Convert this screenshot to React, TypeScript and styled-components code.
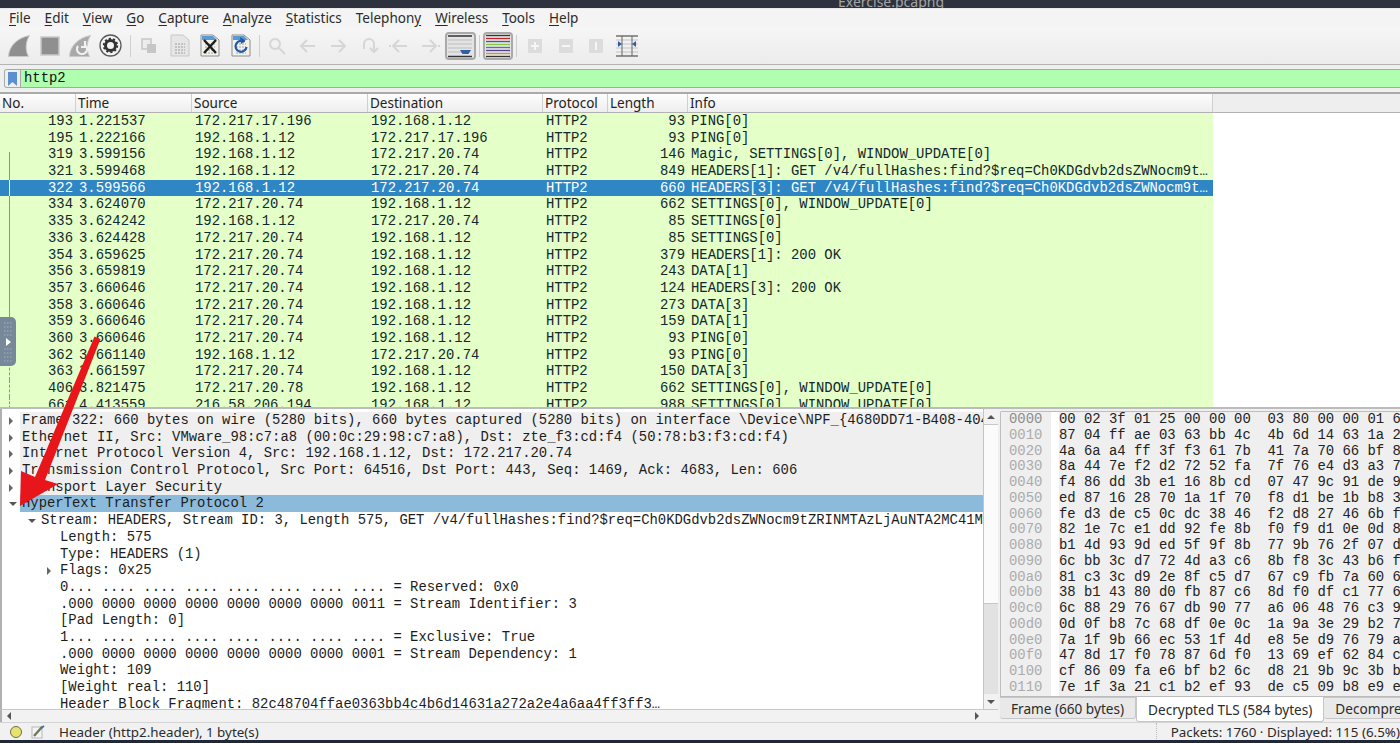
import React from "react";
import styled, { createGlobalStyle } from "styled-components";

const uiFont = `"Noto Sans", "Open Sans", sans-serif`;
const monoFont = `"Liberation Mono", monospace`;

const GlobalStyle = createGlobalStyle`
    html, body {
        margin: 0;
        padding: 0;
        overflow: hidden;
        background: #f0f0f0;
    }
`;

const Page = styled.div`
    position: relative;
    width: 1400px;
    height: 743px;
    overflow: hidden;
    display: flex;
    flex-direction: column;
    background: #f0f0f0;
    font-family: ${uiFont};
`;

const TitleBar = styled.div`
    height: 8px;
    flex: none;
    display: flex;
    align-items: flex-end;
    padding-left: 838px;
    overflow: hidden;
    background: #2d323e;
    color: #a5a5a5;
    font-size: 14px;
    line-height: 12px;
`;

const MenuBar = styled.div`
    height: 19px;
    flex: none;
    display: flex;
    align-items: center;
    gap: 14px;
    padding-left: 9px;
    background: #f4f4f4;
    color: #2b2b2b;
    font-size: 13.5px;
    border-top: 1px solid #e8e8e8;
    box-sizing: border-box;
    u {
        text-underline-offset: 2px;
    }
`;

const ToolBar = styled.div`
    height: 38px;
    flex: none;
    display: flex;
    align-items: center;
    padding-left: 4px;
    box-sizing: border-box;
    background: linear-gradient(#f6f6f6, #ececec);
    border-bottom: 1px solid #b4b4b4;
`;

const Tool = styled.div<{ $on?: boolean }>`
    width: 30.5px;
    height: 28px;
    flex: none;
    display: flex;
    align-items: center;
    justify-content: center;
    box-sizing: border-box;
    ${(p) =>
        p.$on &&
        `
        border: 2px solid #a9a9a9;
        border-radius: 4px;
        background: #e4e4e4;
    `}
`;

const ToolSep = styled.div<{ $w: number }>`
    width: ${(p) => p.$w}px;
    height: 22px;
    flex: none;
    display: flex;
    justify-content: center;
    &::after {
        content: "";
        width: 1px;
        background: #cfcfcf;
    }
`;

const FilterBar = styled.div`
    height: 25px;
    flex: none;
    padding: 4px 0 2px 4px;
    box-sizing: border-box;
    background: #efefef;
`;

const FilterInput = styled.div`
    height: 100%;
    display: flex;
    box-sizing: border-box;
    border: 1px solid #a8a8a8;
    border-right: none;
    border-radius: 3px 0 0 3px;
    background: #afffaf;
    overflow: hidden;
`;

const Bookmark = styled.div`
    width: 15px;
    flex: none;
    display: flex;
    align-items: center;
    justify-content: center;
    background: #efefef;
    border-right: 1px solid #a8a8a8;
`;

const FilterText = styled.div`
    padding-left: 3px;
    font: 13.9px/17px ${monoFont};
    color: #111;
`;

const PacketPane = styled.div`
    height: 313px;
    flex: none;
    display: flex;
    flex-direction: column;
    overflow: hidden;
    margin-top: 2px;
    border-top: 2px solid #aaa;
    border-bottom: 2px solid #bcbcbc;
    background: #fff;
`;

const ListHeader = styled.div`
    height: 18px;
    flex: none;
    display: flex;
    background: #eeeeee;
    border-bottom: 1px solid #b2b2b2;
`;

const HeaderCell = styled.div<{ $w: number }>`
    width: ${(p) => p.$w}px;
    flex: none;
    box-sizing: border-box;
    padding-left: 2px;
    font-size: 13.5px;
    line-height: 18px;
    color: #222;
    background: linear-gradient(#fdfdfd, #eeeeee);
    border-right: 1px solid #cfcfcf;
`;

const PacketRow = styled.div<{ $selected?: boolean }>`
    position: relative;
    width: 1213px;
    height: 16.7px;
    flex: none;
    display: flex;
    font: 13.9px/16.7px ${monoFont};
    white-space: pre;
    color: ${(p) => (p.$selected ? "#fff" : "#12272e")};
    background: ${(p) => (p.$selected ? "#2e86c4" : "#e4ffc7")};
`;

const RelatedLine = styled.div<{ $dash?: boolean; $light?: boolean; $start?: boolean }>`
    position: absolute;
    left: 9px;
    top: ${(p) => (p.$start ? "6px" : "0")};
    bottom: 0;
    border-left: 1px ${(p) => (p.$dash ? "dashed" : "solid")} ${(p) => (p.$light ? "#fff" : "#8a9a80")};
`;

const Cell = styled.div<{ $w: number; $right?: boolean }>`
    width: ${(p) => p.$w}px;
    flex: none;
    box-sizing: border-box;
    overflow: hidden;
    padding: ${(p) => (p.$right ? "0 3px 0 0" : "0 0 0 3px")};
    text-align: ${(p) => (p.$right ? "right" : "left")};
`;

const Bottom = styled.div`
    height: 313px;
    flex: none;
    display: flex;
    background: #f0f0f0;
`;

const DetailColumn = styled.div`
    width: 998px;
    flex: none;
    display: flex;
    flex-direction: column;
`;

const DetailMain = styled.div`
    flex: 1;
    min-height: 0;
    display: flex;
    border-left: 2px solid #b0b0b0;
`;

const DetailTree = styled.div`
    width: 981px;
    flex: none;
    padding-top: 3px;
    overflow: hidden;
    background: #fff;
`;

const DetailRow = styled.div<{ $level: number; $bg?: "grey" | "sel" }>`
    position: relative;
    height: 16.7px;
    margin-left: ${(p) => (p.$bg ? 18 : 0)}px;
    padding-left: ${(p) => (p.$bg ? 2 : 20 + p.$level * 19)}px;
    font: 13.9px/16.7px ${monoFont};
    white-space: pre;
    overflow: hidden;
    color: #1d1d1d;
    background: ${(p) => (p.$bg === "sel" ? "#8cbadb" : p.$bg === "grey" ? "#efefef" : "transparent")};
`;

const TreeRowWrap = styled.div`
    position: relative;
`;

const Twisty = styled.span<{ $open?: boolean; $level: number }>`
    position: absolute;
    top: 5px;
    left: ${(p) => 7 + p.$level * 19}px;
    width: 0;
    height: 0;
    ${(p) =>
        p.$open
            ? `
        margin-top: 2px;
        border-left: 4px solid transparent;
        border-right: 4px solid transparent;
        border-top: 4px solid #555;
    `
            : `
        border-top: 4px solid transparent;
        border-bottom: 4px solid transparent;
        border-left: 4px solid #666;
    `}
`;

const VScroll = styled.div`
    width: 15px;
    flex: none;
    display: flex;
    flex-direction: column;
    background: #e2e2e2;
    border-left: 1px solid #c4c4c4;
    box-sizing: border-box;
`;

const ScrollButton = styled.div`
    height: 15px;
    flex: none;
    display: flex;
    align-items: center;
    justify-content: center;
    background: #f2f2f2;
`;

const ScrollThumb = styled.div`
    height: 180px;
    flex: none;
    box-sizing: border-box;
    background: #fbfbfb;
    border-top: 1px solid #c8c8c8;
    border-bottom: 1px solid #c8c8c8;
`;

const ScrollTrack = styled.div`
    flex: 1;
`;

const HScroll = styled.div`
    height: 12px;
    flex: none;
    display: flex;
    align-items: center;
    justify-content: space-between;
    padding: 0 19px 0 5px;
    background: #f2f2f2;
    border-top: 1px solid #c8c8c8;
    border-left: 2px solid #b0b0b0;
`;

const Arrow = styled.span<{ $dir: "up" | "down" | "left" | "right" }>`
    width: 0;
    height: 0;
    ${(p) =>
        p.$dir === "up" || p.$dir === "down"
            ? `
        border-left: 4px solid transparent;
        border-right: 4px solid transparent;
        border-${p.$dir === "up" ? "bottom" : "top"}: 4px solid #555;
    `
            : `
        border-top: 4px solid transparent;
        border-bottom: 4px solid transparent;
        border-${p.$dir === "left" ? "right" : "left"}: 4px solid #555;
    `}
`;

const HexColumn = styled.div`
    flex: 1;
    min-width: 0;
    margin: 2px 0 0 2px;
    display: flex;
    flex-direction: column;
    overflow: hidden;
`;

const HexPane = styled.div`
    height: 286px;
    flex: none;
    box-sizing: border-box;
    overflow: hidden;
    background: #fff;
    border: 1px solid #bdbdbd;
    border-right: none;
    border-radius: 2px 0 0 0;
`;

const HexRow = styled.div`
    height: 15.77px;
    display: flex;
    font: 13.9px/15.77px ${monoFont};
    white-space: pre;
`;

const HexOffset = styled.div<{ $active?: boolean }>`
    width: 50px;
    flex: none;
    box-sizing: border-box;
    padding-left: 8px;
    color: ${(p) => (p.$active ? "#8c8c8c" : "#ababab")};
    background: #efefef;
`;

const HexBytes = styled.div`
    margin-left: 8px;
    flex: 1;
    color: #222;
    background: #efefef;
`;

const Tabs = styled.div`
    flex: 1;
    display: flex;
    align-items: flex-start;
    font-size: 13.6px;
    color: #2b2b2b;
    white-space: nowrap;
`;

const Tab = styled.div<{ $active?: boolean }>`
    flex: none;
    box-sizing: border-box;
    height: ${(p) => (p.$active ? 25 : 22)}px;
    line-height: ${(p) => (p.$active ? 25 : 22)}px;
    padding: 0 11px;
    background: ${(p) => (p.$active ? "#fff" : "#e9e9e9")};
    border: 1px solid #c6c6c6;
    border-top: ${(p) => (p.$active ? "none" : "1px solid #c6c6c6")};
    border-radius: 0 0 3px 3px;
    border-left-width: ${(p) => (p.$active ? 1 : 0)}px;
`;

const StatusBar = styled.div`
    height: 18px;
    flex: none;
    display: flex;
    align-items: center;
    font-size: 13.4px;
    color: #2b2b2b;
    white-space: nowrap;
    background: #f1f1f1;
    border-top: 1px solid #d4d4d4;
    box-sizing: border-box;
`;

const StatusDot = styled.div`
    width: 12px;
    height: 12px;
    flex: none;
    margin-left: 10px;
    box-sizing: border-box;
    border-radius: 50%;
    background: #e8e36e;
    border: 1px solid #6e6e4a;
`;

const StatusEdit = styled.div`
    margin-left: 9px;
    width: 14px;
    height: 14px;
    flex: none;
`;

const StatusText = styled.div`
    margin-left: 14px;
    flex: 1;
`;

const StatusRight = styled.div`
    padding-left: 14px;
    border-left: 1px dotted #bbb;
`;

const BottomEdge = styled.div`
    height: 3px;
    flex: none;
    background: #1f2838;
`;

const VmTab = styled.div`
    position: absolute;
    left: 0;
    top: 317px;
    width: 16px;
    height: 49px;
    display: flex;
    align-items: center;
    justify-content: center;
    border-radius: 0 5px 5px 0;
    background: #76889a;
`;

const Overlay = styled.svg`
    position: absolute;
    left: 0;
    top: 0;
    pointer-events: none;
`;

const Fin = ({ reload }: { reload?: boolean }) => (
    <svg width="24" height="24" viewBox="0 0 24 24">
        <path
            d="M1.5 22.5 C2 12 10 4 22.5 1.5 C18.5 8 18 16 21.5 22.5 Z"
            fill={reload ? "#a9a9a9" : "#8f8f8f"}
            stroke="#c9c9c9"
        />
        {reload && <path d="M10 12 a5 5 0 1 0 8 0 M17 7 v6 h-4" fill="none" stroke="#f2f2f2" strokeWidth="2.2" />}
    </svg>
);

const StopIcon = () => (
    <svg width="20" height="20" viewBox="0 0 20 20">
        <rect x="1" y="1" width="18" height="18" fill="#8f8f8f" stroke="#c9c9c9" strokeWidth="1.5" />
    </svg>
);

const GearIcon = () => (
    <svg width="23" height="23" viewBox="0 0 23 23">
        <circle cx="11.5" cy="11.5" r="10.5" fill="#f4f4f4" stroke="#5a5a5a" strokeWidth="1.3" />
        <circle cx="11.5" cy="11.5" r="5" fill="none" stroke="#333" strokeWidth="3" />
        <circle cx="11.5" cy="11.5" r="6.8" fill="none" stroke="#333" strokeWidth="1.8" strokeDasharray="2.2 2.1" />
    </svg>
);

const CopyIcon = () => (
    <svg width="16" height="16" viewBox="0 0 16 16">
        <rect x="1" y="1" width="9" height="10" fill="#ececec" stroke="#c6c6c6" strokeWidth="1.5" />
        <rect x="6" y="6" width="9" height="9" fill="#c6c6c6" />
    </svg>
);

const FileIcon = ({ variant }: { variant: "plain" | "close" | "reload" }) => {
    const dim = variant === "plain";
    return (
        <svg width="20" height="23" viewBox="0 0 20 23">
            <path d="M1 1 H13 L19 6 V22 H1 Z" fill={dim ? "#e6e6e6" : "#f2f2ea"} stroke={dim ? "#c8c8c8" : "#8d8d8d"} />
            {!dim && <path d="M2 2 H13 L17 6 H2 Z" fill="#5a9ad0" />}
            <path d="M5 10 h10 M5 13 h10 M5 16 h10 M5 19 h10" stroke={dim ? "#b5b5b5" : "#bcbcbc"} strokeWidth="1.5" strokeDasharray="2 1" />
            {variant === "close" && <path d="M4 6 L16 19 M16 6 L4 19" stroke="#1c1c1c" strokeWidth="2.4" />}
            {variant === "reload" && (
                <>
                    <path d="M13.5 8 a5.5 5.5 0 1 0 2 5" fill="none" stroke="#1f5aa8" strokeWidth="2.2" />
                    <path d="M9 3 L14.5 6.5 L10 10 Z" fill="#1f5aa8" />
                </>
            )}
        </svg>
    );
};

const FadedIcon = ({ d }: { d: string }) => (
    <svg width="20" height="20" viewBox="0 0 20 20">
        <path d={d} fill="none" stroke="#d6d6d6" strokeWidth="2" />
    </svg>
);

const ScrollIcon = () => (
    <svg width="24" height="24" viewBox="0 0 24 24">
        <path d="M0 2 H24 M0 22.5 H24" stroke="#333" strokeWidth="1.3" />
        <path d="M0 6 H24 M0 10 H24 M0 14 H24 M0 18 H14" stroke="#bdbdbd" />
        <path d="M12 16 H23 L20.5 20 H14.5 Z" fill="#2e5fa6" />
    </svg>
);

const ColorIcon = () => (
    <svg width="24" height="24" viewBox="0 0 24 24">
        {["#333", "#c8232a", "#2d5fa8", "#8cc63f", "#3a7abf", "#5a3d8c", "#c79a1e", "#333"].map((c, i) => (
            <path key={i} d={`M0 ${1.5 + i * 3} H24`} stroke={c} strokeWidth="1.3" />
        ))}
    </svg>
);

const SquareIcon = ({ mark }: { mark: string }) => (
    <svg width="14" height="14" viewBox="0 0 14 14">
        <rect width="14" height="14" fill="#dcdcdc" />
        <path d={mark} stroke="#f6f6f6" strokeWidth="2" />
    </svg>
);

const ResizeIcon = () => (
    <svg width="22" height="22" viewBox="0 0 22 22">
        <path d="M0 1 H22 M0 21 H22" stroke="#333" />
        <path d="M0 5 H22 M0 9 H22 M0 13 H22 M0 17 H22" stroke="#c4c4c4" />
        <path d="M6 1 V21 M16 1 V21" stroke="#666" />
        <path d="M2 6 L6 9 L2 12 Z M20 6 L16 9 L20 12 Z" fill="#2e5fa6" />
    </svg>
);

const columns = [76, 116, 176, 175, 65, 80, 525];

const headers = ["No.", "Time", "Source", "Destination", "Protocol", "Length", "Info"];

const a = "172.217.20.74";
const me = "192.168.1.12";
const hdr = "GET /v4/fullHashes:find?$req=Ch0KDGdvb2dsZWNocm9t…";

const packets: string[][] = [
    ["193", "1.221537", "172.217.17.196", me, "93", "PING[0]"],
    ["195", "1.222166", me, "172.217.17.196", "93", "PING[0]"],
    ["319", "3.599156", me, a, "146", "Magic, SETTINGS[0], WINDOW_UPDATE[0]"],
    ["321", "3.599468", me, a, "849", `HEADERS[1]: ${hdr}`],
    ["322", "3.599566", me, a, "660", `HEADERS[3]: ${hdr}`],
    ["334", "3.624070", a, me, "662", "SETTINGS[0], WINDOW_UPDATE[0]"],
    ["335", "3.624242", me, a, "85", "SETTINGS[0]"],
    ["336", "3.624428", a, me, "85", "SETTINGS[0]"],
    ["354", "3.659625", a, me, "379", "HEADERS[1]: 200 OK"],
    ["356", "3.659819", a, me, "243", "DATA[1]"],
    ["357", "3.660646", a, me, "124", "HEADERS[3]: 200 OK"],
    ["358", "3.660646", a, me, "273", "DATA[3]"],
    ["359", "3.660646", a, me, "159", "DATA[1]"],
    ["360", "3.660646", a, me, "93", "PING[0]"],
    ["362", "3.661140", me, a, "93", "PING[0]"],
    ["363", "3.661597", a, me, "150", "DATA[3]"],
    ["406", "3.821475", "172.217.20.78", me, "662", "SETTINGS[0], WINDOW_UPDATE[0]"],
    ["661", "4.413559", "216.58.206.194", me, "988", "SETTINGS[0], WINDOW_UPDATE[0]"],
];

type TreeItem = { text: string; level: number; twisty?: "open" | "closed"; bg?: "grey" | "sel" };

const tree: TreeItem[] = [
    {
        text: "Frame 322: 660 bytes on wire (5280 bits), 660 bytes captured (5280 bits) on interface \\Device\\NPF_{4680DD71-B408-404F-8C1A}",
        level: 0,
        twisty: "closed",
        bg: "grey",
    },
    {
        text: "Ethernet II, Src: VMware_98:c7:a8 (00:0c:29:98:c7:a8), Dst: zte_f3:cd:f4 (50:78:b3:f3:cd:f4)",
        level: 0,
        twisty: "closed",
        bg: "grey",
    },
    { text: "Internet Protocol Version 4, Src: 192.168.1.12, Dst: 172.217.20.74", level: 0, twisty: "closed", bg: "grey" },
    {
        text: "Transmission Control Protocol, Src Port: 64516, Dst Port: 443, Seq: 1469, Ack: 4683, Len: 606",
        level: 0,
        twisty: "closed",
        bg: "grey",
    },
    { text: "Transport Layer Security", level: 0, twisty: "closed", bg: "grey" },
    { text: "HyperText Transfer Protocol 2", level: 0, twisty: "open", bg: "sel" },
    {
        text: "Stream: HEADERS, Stream ID: 3, Length 575, GET /v4/fullHashes:find?$req=Ch0KDGdvb2dsZWNocm9tZRINMTAzLjAuNTA2MC41Mw",
        level: 1,
        twisty: "open",
    },
    { text: "Length: 575", level: 2 },
    { text: "Type: HEADERS (1)", level: 2 },
    { text: "Flags: 0x25", level: 2, twisty: "closed" },
    { text: "0... .... .... .... .... .... .... .... = Reserved: 0x0", level: 2 },
    { text: ".000 0000 0000 0000 0000 0000 0000 0011 = Stream Identifier: 3", level: 2 },
    { text: "[Pad Length: 0]", level: 2 },
    { text: "1... .... .... .... .... .... .... .... = Exclusive: True", level: 2 },
    { text: ".000 0000 0000 0000 0000 0000 0000 0001 = Stream Dependency: 1", level: 2 },
    { text: "Weight: 109", level: 2 },
    { text: "[Weight real: 110]", level: 2 },
    { text: "Header Block Fragment: 82c48704ffae0363bb4c4b6d14631a272a2e4a6aa4ff3ff3…", level: 2 },
];

const hex: [string, string][] = [
    ["0000", "00 02 3f 01 25 00 00 00  03 80 00 00 01 6"],
    ["0010", "87 04 ff ae 03 63 bb 4c  4b 6d 14 63 1a 2"],
    ["0020", "4a 6a a4 ff 3f f3 61 7b  41 7a 70 66 bf 8"],
    ["0030", "8a 44 7e f2 d2 72 52 fa  7f 76 e4 d3 a3 7"],
    ["0040", "f4 86 dd 3b e1 16 8b cd  07 47 9c 91 de 9"],
    ["0050", "ed 87 16 28 70 1a 1f 70  f8 d1 be 1b b8 3"],
    ["0060", "fe d3 de c5 0c dc 38 46  f2 d8 27 46 6b f"],
    ["0070", "82 1e 7c e1 dd 92 fe 8b  f0 f9 d1 0e 0d 8"],
    ["0080", "b1 4d 93 9d ed 5f 9f 8b  77 9b 76 2f 07 d"],
    ["0090", "6c bb 3c d7 72 4d a3 c6  8b f8 3c 43 b6 f"],
    ["00a0", "81 c3 3c d9 2e 8f c5 d7  67 c9 fb 7a 60 6"],
    ["00b0", "38 b1 43 80 d0 fb 87 c6  8d f0 df c1 77 6"],
    ["00c0", "6c 88 29 76 67 db 90 77  a6 06 48 76 c3 9"],
    ["00d0", "0d 0f b8 7c 68 df 0e 0c  1a 9a 3e 29 b2 7"],
    ["00e0", "7a 1f 9b 66 ec 53 1f 4d  e8 5e d9 76 79 a"],
    ["00f0", "47 8d 17 f0 78 87 6d f0  13 69 ef 62 84 c"],
    ["0100", "cf 86 09 fa e6 bf b2 6c  d8 21 9b 9c 3b b"],
    ["0110", "7e 1f 3a 21 c1 b2 ef 93  de c5 09 b8 e9 e"],
];

const App: React.FC = () => {
    return (
        <Page>
            <GlobalStyle />
            <TitleBar>Exercise.pcapng</TitleBar>
            <MenuBar>
                <span><u>F</u>ile</span>
                <span><u>E</u>dit</span>
                <span><u>V</u>iew</span>
                <span><u>G</u>o</span>
                <span><u>C</u>apture</span>
                <span><u>A</u>nalyze</span>
                <span><u>S</u>tatistics</span>
                <span>Telephon<u>y</u></span>
                <span><u>W</u>ireless</span>
                <span><u>T</u>ools</span>
                <span><u>H</u>elp</span>
            </MenuBar>
            <ToolBar>
                <Tool><Fin /></Tool>
                <Tool><StopIcon /></Tool>
                <Tool><Fin reload /></Tool>
                <Tool><GearIcon /></Tool>
                <ToolSep $w={8} />
                <Tool><CopyIcon /></Tool>
                <Tool><FileIcon variant="plain" /></Tool>
                <Tool><FileIcon variant="close" /></Tool>
                <Tool><FileIcon variant="reload" /></Tool>
                <ToolSep $w={6} />
                <Tool><FadedIcon d="M8 3 a5 5 0 1 0 .1 0 M12 12 L18 18" /></Tool>
                <Tool><FadedIcon d="M17 10 H3 M9 4 L3 10 L9 16" /></Tool>
                <Tool><FadedIcon d="M3 10 H17 M11 4 L17 10 L11 16" /></Tool>
                <Tool><FadedIcon d="M5 13 V8 a5 5 0 0 1 10 0 V15 M11 12 L15 16 L19 12" /></Tool>
                <Tool><FadedIcon d="M18 10 H5 M10 4 L4 10 L10 16 M1 9 V11" /></Tool>
                <Tool><FadedIcon d="M2 10 H15 M10 4 L16 10 L10 16 M19 9 V11" /></Tool>
                <Tool $on><ScrollIcon /></Tool>
                <ToolSep $w={7} />
                <Tool $on><ColorIcon /></Tool>
                <ToolSep $w={7} />
                <Tool><SquareIcon mark="M3 7 H11 M7 3 V11" /></Tool>
                <Tool><SquareIcon mark="M3 7 H11" /></Tool>
                <Tool><SquareIcon mark="M7 3 V11" /></Tool>
                <Tool><ResizeIcon /></Tool>
            </ToolBar>
            <FilterBar>
                <FilterInput>
                    <Bookmark>
                        <svg width="9" height="14" viewBox="0 0 9 14">
                            <path d="M0 0 H9 V14 L4.5 10 L0 14 Z" fill="#5b8fd0" />
                        </svg>
                    </Bookmark>
                    <FilterText>http2</FilterText>
                </FilterInput>
            </FilterBar>
            <PacketPane>
                <ListHeader>
                    {headers.map((h, i) => (
                        <HeaderCell key={h} $w={columns[i]}>
                            {h}
                        </HeaderCell>
                    ))}
                </ListHeader>
                {packets.map((p, i) => (
                    <PacketRow key={p[0]} $selected={p[0] === "322"}>
                        {i >= 2 && <RelatedLine $start={i === 2} $dash={i >= 15} $light={p[0] === "322"} />}
                        <Cell $w={columns[0]} $right>{p[0]}</Cell>
                        <Cell $w={columns[1]}>{p[1]}</Cell>
                        <Cell $w={columns[2]}>{p[2]}</Cell>
                        <Cell $w={columns[3]}>{p[3]}</Cell>
                        <Cell $w={columns[4]}>HTTP2</Cell>
                        <Cell $w={columns[5]} $right>{p[4]}</Cell>
                        <Cell $w={columns[6]}>{p[5]}</Cell>
                    </PacketRow>
                ))}
            </PacketPane>
            <Bottom>
                <DetailColumn>
                    <DetailMain>
                        <DetailTree>
                            {tree.map((t) => (
                                <TreeRowWrap key={t.text}>
                                    {t.twisty && <Twisty $open={t.twisty === "open"} $level={t.level} />}
                                    <DetailRow $level={t.level} $bg={t.bg}>
                                        {t.text}
                                    </DetailRow>
                                </TreeRowWrap>
                            ))}
                        </DetailTree>
                        <VScroll>
                            <ScrollButton><Arrow $dir="up" /></ScrollButton>
                            <ScrollThumb />
                            <ScrollTrack />
                            <ScrollButton><Arrow $dir="down" /></ScrollButton>
                        </VScroll>
                    </DetailMain>
                    <HScroll>
                        <Arrow $dir="left" />
                        <Arrow $dir="right" />
                    </HScroll>
                </DetailColumn>
                <HexColumn>
                    <HexPane>
                        {hex.map(([off, bytes], i) => (
                            <HexRow key={off}>
                                <HexOffset $active={i === 0}>{off}</HexOffset>
                                <HexBytes>{bytes}</HexBytes>
                            </HexRow>
                        ))}
                    </HexPane>
                    <Tabs>
                        <Tab>Frame (660 bytes)</Tab>
                        <Tab $active>Decrypted TLS (584 bytes)</Tab>
                        <Tab>Decompressed Header</Tab>
                    </Tabs>
                </HexColumn>
            </Bottom>
            <StatusBar>
                <StatusDot />
                <StatusEdit>
                    <svg width="14" height="14" viewBox="0 0 14 14">
                        <rect x="1" y="2" width="10" height="11" fill="#f4f4f4" stroke="#b8b8b8" />
                        <path d="M3 11 L11 2" stroke="#6a7a5a" strokeWidth="2.4" />
                        <path d="M10 3 L13 1" stroke="#3a6fb0" strokeWidth="2" />
                    </svg>
                </StatusEdit>
                <StatusText>Header (http2.header), 1 byte(s)</StatusText>
                <StatusRight>Packets: 1760 · Displayed: 115 (6.5%)</StatusRight>
            </StatusBar>
            <BottomEdge />
            <VmTab>
                <svg width="10" height="40" viewBox="0 0 10 40">
                    <path d="M1 1 H9 M1 5 H9 M1 9 H9 M1 13 H9 M1 27 H9 M1 31 H9 M1 35 H9 M1 39 H9" stroke="#a3b0bd" strokeDasharray="1.5 1.5" />
                    <path d="M3 16 L8 20 L3 24 Z" fill="#fff" />
                </svg>
            </VmTab>
            <Overlay width="1400" height="743" viewBox="0 0 1400 743">
                <path d="M94.5 336.5 L100.5 339 L45 480 L58 484 L20 506 L21 471 L35 477 Z" fill="#e8151b" />
            </Overlay>
        </Page>
    );
};

export default App;
